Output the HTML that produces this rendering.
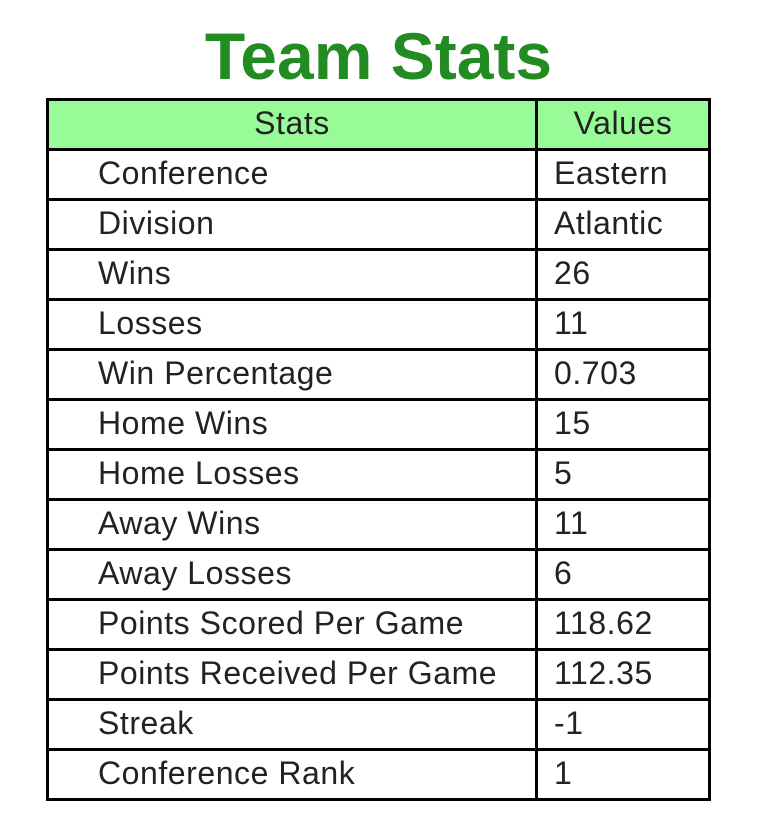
<!DOCTYPE html>
<html><head><style>
body{margin:0;width:757px;height:830px;background:#fff;position:relative;font-family:"Liberation Sans",Arial,sans-serif;overflow:hidden}
.t{position:absolute;left:0;width:757px;text-align:center;top:20px;font-size:66px;font-weight:bold;color:#228B22;line-height:72px}
.tb{position:absolute;left:46px;top:98px;width:665px;border-collapse:collapse}
.tb td{border:3px solid #000;height:47px;padding:0 0 2px 0;box-sizing:border-box;font-size:32px;letter-spacing:0.55px;color:#222;line-height:45px;white-space:nowrap}
.tb tr.h td{background:#98FB98;text-align:center}
.tb td.a{width:489px;padding-left:49px}
.tb td.b{padding-left:16px}
</style></head><body>
<div class="t">Team Stats</div>
<table class="tb">
<tr class="h"><td style="width:489px">Stats</td><td>Values</td></tr>
<tr><td class="a">Conference</td><td class="b">Eastern</td></tr>
<tr><td class="a">Division</td><td class="b">Atlantic</td></tr>
<tr><td class="a">Wins</td><td class="b">26</td></tr>
<tr><td class="a">Losses</td><td class="b">11</td></tr>
<tr><td class="a">Win Percentage</td><td class="b">0.703</td></tr>
<tr><td class="a">Home Wins</td><td class="b">15</td></tr>
<tr><td class="a">Home Losses</td><td class="b">5</td></tr>
<tr><td class="a">Away Wins</td><td class="b">11</td></tr>
<tr><td class="a">Away Losses</td><td class="b">6</td></tr>
<tr><td class="a">Points Scored Per Game</td><td class="b">118.62</td></tr>
<tr><td class="a">Points Received Per Game</td><td class="b">112.35</td></tr>
<tr><td class="a">Streak</td><td class="b">-1</td></tr>
<tr><td class="a">Conference Rank</td><td class="b">1</td></tr>
</table>
</body></html>
